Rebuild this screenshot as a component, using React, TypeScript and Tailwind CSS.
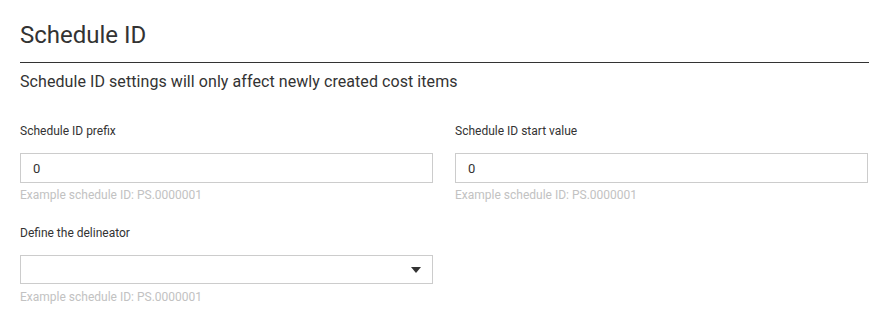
import { useState } from "react";

const font = { fontFamily: "Roboto, 'Liberation Sans', sans-serif" };

function Field({
  label,
  value,
  onChange,
}: {
  label: string;
  value: string;
  onChange: (v: string) => void;
}) {
  return (
    <div className="flex flex-col">
      <label className="text-[12px] leading-4 text-[#333]">{label}</label>
      <input
        value={value}
        onChange={(e) => onChange(e.target.value)}
        className="mt-[14px] h-[30px] w-full border border-[#cccccc] bg-white pl-3 text-[13px] text-[#333] outline-none"
      />
      <p className="mt-[4px] text-[12px] leading-4 text-[#c2c2c2]">
        Example schedule ID: PS.0000001
      </p>
    </div>
  );
}

export default function App() {
  const [prefix, setPrefix] = useState("0");
  const [start, setStart] = useState("0");

  return (
    <div className="min-h-screen bg-white" style={font}>
      <div className="ml-5 w-[849px] pt-[21px]">
        <h1 className="border-b border-[#333] pb-[13px] text-[24px] leading-7 font-normal text-[#333]">
          Schedule ID
        </h1>
        <p className="mt-[9px] text-[16px] leading-5 tracking-[0.07px] text-[#333]">
          Schedule ID settings will only affect newly created cost items
        </p>

        <div className="mt-[31px] grid grid-cols-[413px_413px] gap-x-[22px]">
          <Field label="Schedule ID prefix" value={prefix} onChange={setPrefix} />
          <Field label="Schedule ID start value" value={start} onChange={setStart} />
        </div>

        <div className="mt-[22px] flex w-[413px] flex-col">
          <label className="text-[12px] leading-4 text-[#333]">Define the delineator</label>
          <div className="mt-[14px] flex h-[29px] items-center justify-end border border-[#cccccc] bg-white pr-[11px]">
            <svg width="10" height="6" viewBox="0 0 10 6">
              <path d="M0 0h10L5 6z" fill="#333" />
            </svg>
          </div>
          <p className="mt-[5px] text-[12px] leading-4 text-[#c2c2c2]">
            Example schedule ID: PS.0000001
          </p>
        </div>
      </div>
    </div>
  );
}
